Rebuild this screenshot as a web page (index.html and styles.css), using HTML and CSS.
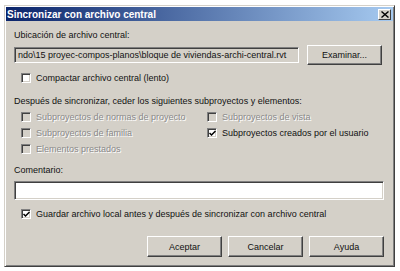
FILE: index.html
```html
<!DOCTYPE html>
<html lang="es">
<head>
<meta charset="utf-8">
<link rel="stylesheet" href="styles.css">
<title>Sincronizar con archivo central</title>
</head>
<body>
<div class="dialog">
  <div class="titlebar">
    <span class="title">Sincronizar con archivo central</span>
    <span class="close"><svg width="8" height="7" viewBox="0 0 8 7"><path d="M0.5 0.5 L7.5 6.5 M7.5 0.5 L0.5 6.5" stroke="#000" stroke-width="1.4"/></svg></span>
  </div>
  <div class="content">
    <div class="label">Ubicación de archivo central:</div>
    <div class="pathrow">
      <div class="path">ndo\15 proyec-compos-planos\bloque de viviendas-archi-central.rvt</div>
      <div class="btn">Examinar...</div>
    </div>
    <div class="check compact"><span class="box"></span><span>Compactar archivo central (lento)</span></div>
    <div class="label after">Después de sincronizar, ceder los siguientes subproyectos y elementos:</div>
    <div class="grid">
      <div class="check disabled"><span class="box"></span><span class="dtext">Subproyectos de normas de proyecto</span></div>
      <div class="check disabled"><span class="box"></span><span class="dtext">Subproyectos de vista</span></div>
      <div class="check disabled"><span class="box"></span><span class="dtext">Subproyectos de familia</span></div>
      <div class="check"><span class="box"><svg width="7" height="7" viewBox="0 0 7 7"><path d="M0.5 3 L2.5 5 L6.5 1" fill="none" stroke="#000" stroke-width="1.5"/></svg></span><span>Subproyectos creados por el usuario</span></div>
      <div class="check disabled"><span class="box"></span><span class="dtext">Elementos prestados</span></div>
    </div>
    <div class="label comlabel">Comentario:</div>
    <div class="comment"></div>
    <div class="check save"><span class="box"><svg width="7" height="7" viewBox="0 0 7 7"><path d="M0.5 3 L2.5 5 L6.5 1" fill="none" stroke="#000" stroke-width="1.5"/></svg></span><span>Guardar archivo local antes y después de sincronizar con archivo central</span></div>
    <div class="buttons">
      <div class="btn">Aceptar</div>
      <div class="btn">Cancelar</div>
      <div class="btn">Ayuda</div>
    </div>
  </div>
</div>
</body>
</html>
```

FILE: styles.css
```css
html, body {
  margin: 0;
  padding: 0;
  background: #ffffff;
}
body {
  font-family: "Liberation Sans", Arial, sans-serif;
  font-size: 9px;
  color: #111;
}
.dialog {
  margin: 5px 0 0 4px;
  width: 391px;
  height: 262px;
  box-sizing: border-box;
  background: #d4d0c8;
  border: 1px solid;
  border-color: #d4d0c8 #404040 #404040 #d4d0c8;
  box-shadow: inset 1px 1px #ffffff, inset -1px -1px #808080;
  padding: 1px;
}
.titlebar {
  height: 14px;
  display: flex;
  align-items: center;
  justify-content: space-between;
  background: linear-gradient(to right, #0a246a, #a6caf0);
  padding: 0 2px 0 1px;
}
.title {
  color: #fff;
  font-weight: bold;
  font-size: 10px;
  white-space: nowrap;
}
.close {
  width: 13px;
  height: 11px;
  box-sizing: border-box;
  background: #d4d0c8;
  border: 1px solid;
  border-color: #ffffff #404040 #404040 #ffffff;
  display: flex;
  align-items: center;
  justify-content: center;
}
.content {
  padding: 8px 7px 0 8px;
}
.label {
  height: 12px;
  line-height: 12px;
  white-space: nowrap;
}
.pathrow {
  margin-top: 4px;
  display: flex;
  align-items: center;
  gap: 8px;
}
.path {
  width: 285px;
  height: 16px;
  line-height: 14px;
  box-sizing: border-box;
  border: 1px solid;
  border-color: #808080 #ffffff #ffffff #808080;
  box-shadow: inset 1px 1px #404040;
  padding-left: 3px;
  white-space: nowrap;
  overflow: hidden;
}
.btn {
  width: 75px;
  height: 20px;
  box-sizing: border-box;
  border: 1px solid;
  border-color: #ffffff #404040 #404040 #ffffff;
  box-shadow: inset -1px -1px #808080;
  display: flex;
  align-items: center;
  justify-content: center;
  white-space: nowrap;
}
.check {
  display: flex;
  align-items: center;
  gap: 5px;
  height: 12px;
  padding-left: 7px;
  white-space: nowrap;
}
.box {
  width: 10px;
  height: 10px;
  box-sizing: border-box;
  background: #fff;
  border: 1px solid;
  border-color: #808080 #ffffff #ffffff #808080;
  box-shadow: inset 1px 1px #404040, inset -1px -1px #d4d0c8;
  display: flex;
  align-items: center;
  justify-content: center;
  flex: none;
}
.disabled .box {
  background: #d4d0c8;
}
.dtext {
  color: #8a8a8a;
  text-shadow: 1px 1px #ffffff;
}
.compact {
  margin-top: 7px;
}
.after {
  margin-top: 11px;
}
.grid {
  margin-top: 2px;
  display: grid;
  grid-template-columns: 186px 1fr;
  grid-auto-rows: 16px;
  align-items: center;
}
.comlabel {
  margin-top: 7px;
}
.comment {
  margin-top: 5px;
  height: 19px;
  width: 370px;
  box-sizing: border-box;
  background: #fff;
  border: 1px solid;
  border-color: #808080 #ffffff #ffffff #808080;
  box-shadow: inset 1px 1px #404040, inset -1px -1px #d4d0c8;
}
.save {
  margin-top: 8px;
}
.buttons {
  margin-top: 16px;
  display: flex;
  justify-content: flex-end;
  gap: 6px;
  padding-right: 2px;
}
.buttons .btn {
  height: 21px;
}
```
